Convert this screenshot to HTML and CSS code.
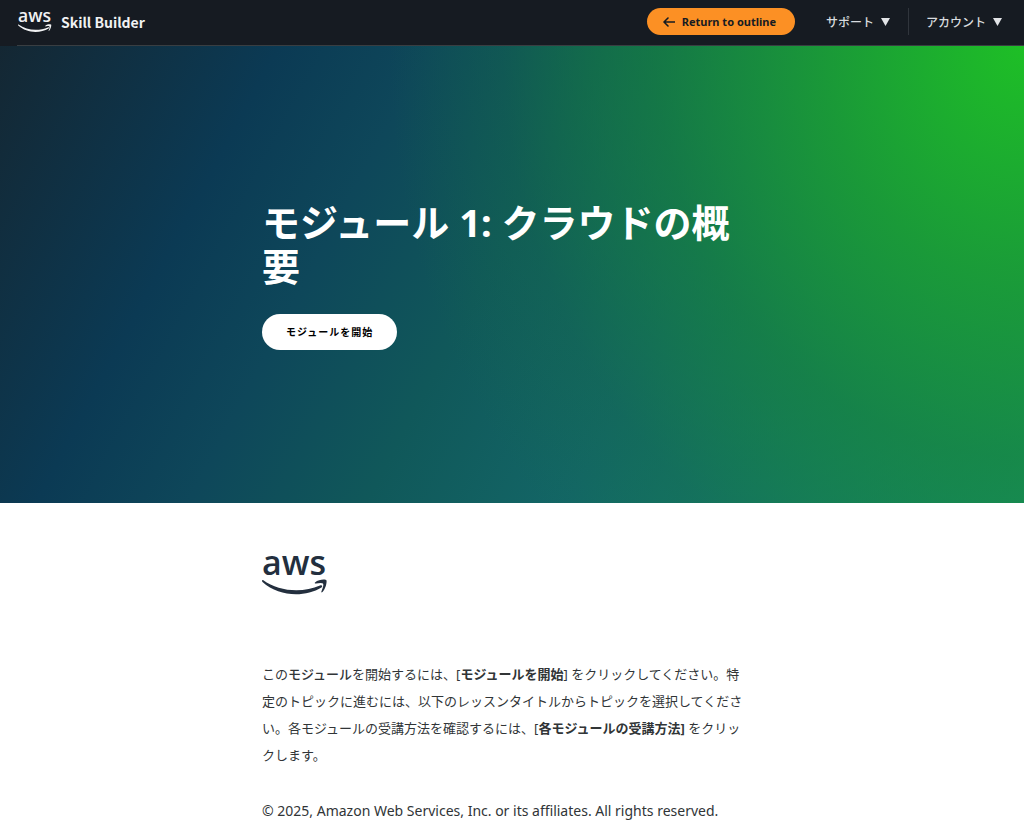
FILE: index.html
```html
<!DOCTYPE html>
<html lang="ja">
  <head>
    <meta charset="UTF-8" />
    <meta name="viewport" content="width=device-width, initial-scale=1.0" />
    <title>モジュール 1: クラウドの概要</title>
    <link rel="stylesheet" href="styles.css">
  </head>

  <body>
    <header class="topbar">
      <a class="brand" href="#">
        <svg class="brand-logo" viewBox="0 0 66 42" role="img" aria-label="aws">
          <text class="logo-text" x="32" y="21" text-anchor="middle">aws</text>
          <path d="M1 26C17 38 41 39 58 31.500C60 30.700 61 32 59.500 33.500C43 43.500 17 43 .5 28C-.5 26.800 .2 25.500 1 26Z" />
          <path d="M53 28.500C57 25 64 25 64.500 26.500C65 28.500 63.500 35 60.500 38C59.500 38.800 59 38.300 59.500 37.300C60.500 34.500 62 31 61 29.500C60 28.500 56.500 29 54 29.500C52.800 29.700 52.500 29 53 28.500Z" />
        </svg>
        <span>Skill Builder</span>
      </a>
      <nav class="topnav">
        <button class="return-btn">
          <svg class="arrow" viewBox="0 0 12 10" aria-hidden="true">
            <path d="M11.500 5H1.500M5 1L1 5L5 9" />
          </svg>
          Return to outline
        </button>
        <button class="menu-btn">サポート
          <svg class="caret" viewBox="0 0 9 8" aria-hidden="true"><path d="M0 0H9L4.500 8Z" /></svg>
        </button>
        <button class="menu-btn menu-account">アカウント
          <svg class="caret" viewBox="0 0 9 8" aria-hidden="true"><path d="M0 0H9L4.500 8Z" /></svg>
        </button>
      </nav>
    </header>

    <section class="hero">
      <div class="column">
        <h1>モジュール 1: クラウドの概要</h1>
        <button class="start-btn">モジュールを開始</button>
      </div>
    </section>

    <main class="column content">
      <svg class="content-logo" viewBox="0 0 66 42" role="img" aria-label="aws">
        <text class="logo-text" x="32" y="21" text-anchor="middle">aws</text>
        <path d="M1 26C17 38 41 39 58 31.500C60 30.700 61 32 59.500 33.500C43 43.500 17 43 .5 28C-.5 26.800 .2 25.500 1 26Z" />
        <path d="M53 28.500C57 25 64 25 64.500 26.500C65 28.500 63.500 35 60.500 38C59.500 38.800 59 38.300 59.500 37.300C60.500 34.500 62 31 61 29.500C60 28.500 56.500 29 54 29.500C52.800 29.700 52.500 29 53 28.500Z" />
      </svg>
      <p class="intro">
        この<span class="medium">モジュール</span>を開始するには、[<b>モジュールを開始</b>] をクリックしてください。特<br />定のトピックに進むには、以下のレッスンタイトルからトピックを選択してくださ<br />い。各モジュールの受講方法を確認するには、[<b>各モジュールの受講方法]</b> をクリッ<br />クします。
      </p>
      <p class="copyright">© 2025, Amazon Web Services, Inc. or its affiliates. All rights reserved.</p>
    </main>
  </body>
</html>
```
FILE: styles.css
```css
* {
  box-sizing: border-box;
}

body {
  margin: 0;
  background-color: #ffffff;
  color: #313537;
  font-family: "Noto Sans CJK JP", sans-serif;
}

button {
  border: none;
  font-family: inherit;
  cursor: pointer;
  white-space: nowrap;
}

.topbar {
  display: flex;
  justify-content: space-between;
  align-items: center;
  height: 46px;
  padding: 0 22px 3px 18px;
  background-color: #161b22;
  background-image: linear-gradient(#393e42, #393e42);
  background-repeat: no-repeat;
  background-position: 17px 100%;
  background-size: 100% 1px;
}

.brand {
  display: flex;
  align-items: center;
  gap: 9px;
  color: #f1f2f3;
  font-size: 14px;
  font-weight: 700;
  text-decoration: none;
}

.brand-logo {
  width: 34px;
  height: 22px;
  fill: #f1f2f3;
  overflow: visible;
}

.logo-text {
  font-family: "Open Sans", sans-serif;
  font-size: 34px;
  font-weight: 600;
}

.topnav {
  display: flex;
  align-items: center;
}

.return-btn {
  display: flex;
  align-items: center;
  gap: 7px;
  height: 27px;
  margin-right: 31px;
  padding: 0 19px 0 16px;
  border-radius: 14px;
  background-color: #fc9024;
  color: #161b22;
  font-family: "Noto Sans", sans-serif;
  font-size: 11px;
  font-weight: 700;
}

.arrow {
  width: 12px;
  height: 10px;
  fill: none;
  stroke: #161b22;
  stroke-width: 1.6;
  stroke-linecap: round;
  stroke-linejoin: round;
}

.menu-btn {
  display: flex;
  align-items: center;
  gap: 7px;
  height: 27px;
  padding: 0;
  background: none;
  color: #d8dbdf;
  font-size: 12px;
  font-weight: 500;
}

.menu-account {
  margin-left: 18px;
  padding-left: 17px;
  border-left: 1px solid #30353c;
}

.caret {
  width: 9px;
  height: 8px;
  fill: #e2e4e7;
}

.column {
  width: 100%;
  max-width: 500px;
  margin: 0 auto;
}

.hero {
  display: flex;
  align-items: center;
  min-height: 457px;
  background:
    radial-gradient(ellipse 62% 155% at 100% 0, #1ebf26 0%, rgba(27, 160, 48, 0.85) 32%, rgba(22, 133, 58, 0.65) 58%, rgba(20, 110, 70, 0.3) 82%, rgba(18, 100, 80, 0) 100%),
    linear-gradient(118deg, #142733 0%, #0b3a54 22%, #0e475a 34%, #10585a 48%, #136666 64%, #189468 100%);
}

h1 {
  margin: 0 0 26px;
  color: #ffffff;
  font-family: "Noto Sans", "Noto Sans CJK JP", sans-serif;
  font-size: 38px;
  font-weight: 700;
  line-height: 44px;
}

.start-btn {
  height: 36px;
  padding: 0 24px;
  border-radius: 18px;
  background-color: #ffffff;
  color: #000000;
  font-size: 10px;
  font-weight: 700;
  letter-spacing: 1px;
}

.content {
  padding: 51px 0 16px;
}

.content-logo {
  display: block;
  width: 66px;
  height: 42px;
  margin-bottom: 65px;
  fill: #232f3e;
  overflow: visible;
}

.intro {
  margin: 0 0 28px;
  font-family: "Noto Sans", "Noto Sans CJK JP", sans-serif;
  font-size: 13px;
  line-height: 27px;
  white-space: nowrap;
}

.medium {
  font-weight: 500;
}

.copyright {
  margin: 0;
  font-family: "Noto Sans", sans-serif;
  font-size: 14px;
  line-height: 27px;
}
```
